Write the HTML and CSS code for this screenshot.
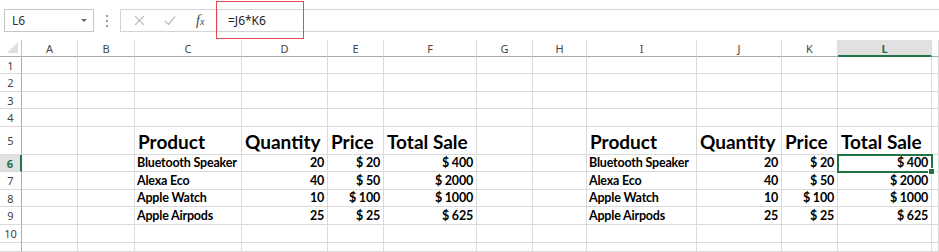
FILE: index.html
```html
<!DOCTYPE html>
<html lang="en">
<head>
    <meta charset="UTF-8">
    <title>Sheet1 - Excel</title>
    <link rel="stylesheet" href="styles.css">
</head>
<body>
    <div class="formula-row">
        <div class="name-box">
            <span>L6</span>
            <span class="drop"></span>
        </div>
        <div class="grip">
            <i></i><i></i><i></i>
        </div>
        <div class="formula-box">
            <div class="fx-tools">
                <svg class="tool" width="11" height="11" viewBox="0 0 11 11"><path d="M1 1 L10 10 M10 1 L1 10" stroke="#bdbdbd" stroke-width="1.2" fill="none"/></svg>
                <svg class="tool" width="12" height="11" viewBox="0 0 12 11"><path d="M1 6 L4.5 9.5 L11 1.5" stroke="#bdbdbd" stroke-width="1.2" fill="none"/></svg>
                <span class="fx">f<small>x</small></span>
            </div>
            <div class="formula">=J6*K6</div>
        </div>
        <div class="callout"></div>
    </div>

    <div class="sheet">
        <!-- column headings -->
        <div class="corner"><span class="tri"></span></div>
        <div class="ch">A</div><div class="ch">B</div><div class="ch">C</div><div class="ch">D</div>
        <div class="ch">E</div><div class="ch">F</div><div class="ch">G</div><div class="ch">H</div>
        <div class="ch">I</div><div class="ch">J</div><div class="ch">K</div><div class="ch active">L</div><div class="ch"></div>

        <div class="rh">1</div><div class="c"></div><div class="c"></div><div class="c"></div><div class="c"></div><div class="c"></div><div class="c"></div><div class="c"></div><div class="c"></div><div class="c"></div><div class="c"></div><div class="c"></div><div class="c"></div><div class="c"></div>
        <div class="rh">2</div><div class="c"></div><div class="c"></div><div class="c"></div><div class="c"></div><div class="c"></div><div class="c"></div><div class="c"></div><div class="c"></div><div class="c"></div><div class="c"></div><div class="c"></div><div class="c"></div><div class="c"></div>
        <div class="rh">3</div><div class="c"></div><div class="c"></div><div class="c"></div><div class="c"></div><div class="c"></div><div class="c"></div><div class="c"></div><div class="c"></div><div class="c"></div><div class="c"></div><div class="c"></div><div class="c"></div><div class="c"></div>
        <div class="rh">4</div><div class="c"></div><div class="c"></div><div class="c"></div><div class="c"></div><div class="c"></div><div class="c"></div><div class="c"></div><div class="c"></div><div class="c"></div><div class="c"></div><div class="c"></div><div class="c"></div><div class="c"></div>

        <div class="rh">5</div><div class="c"></div><div class="c"></div>
        <div class="c h">Product</div><div class="c h">Quantity</div><div class="c h">Price</div><div class="c h">Total Sale</div>
        <div class="c"></div><div class="c"></div>
        <div class="c h">Product</div><div class="c h">Quantity</div><div class="c h">Price</div><div class="c h">Total Sale</div><div class="c"></div>

        <div class="rh active">6</div><div class="c"></div><div class="c"></div>
        <div class="c t">Bluetooth Speaker</div><div class="c n">20</div><div class="c n">$ 20</div><div class="c n">$ 400</div>
        <div class="c"></div><div class="c"></div>
        <div class="c t">Bluetooth Speaker</div><div class="c n">20</div><div class="c n">$ 20</div><div class="c n selected">$ 400<span class="handle"></span></div><div class="c"></div>

        <div class="rh">7</div><div class="c"></div><div class="c"></div>
        <div class="c t">Alexa Eco</div><div class="c n">40</div><div class="c n">$ 50</div><div class="c n">$ 2000</div>
        <div class="c"></div><div class="c"></div>
        <div class="c t">Alexa Eco</div><div class="c n">40</div><div class="c n">$ 50</div><div class="c n">$ 2000</div><div class="c"></div>

        <div class="rh">8</div><div class="c"></div><div class="c"></div>
        <div class="c t">Apple Watch</div><div class="c n">10</div><div class="c n">$ 100</div><div class="c n">$ 1000</div>
        <div class="c"></div><div class="c"></div>
        <div class="c t">Apple Watch</div><div class="c n">10</div><div class="c n">$ 100</div><div class="c n">$ 1000</div><div class="c"></div>

        <div class="rh">9</div><div class="c"></div><div class="c"></div>
        <div class="c t">Apple Airpods</div><div class="c n">25</div><div class="c n">$ 25</div><div class="c n">$ 625</div>
        <div class="c"></div><div class="c"></div>
        <div class="c t">Apple Airpods</div><div class="c n">25</div><div class="c n">$ 25</div><div class="c n">$ 625</div><div class="c"></div>

        <div class="rh">10</div><div class="c"></div><div class="c"></div><div class="c"></div><div class="c"></div><div class="c"></div><div class="c"></div><div class="c"></div><div class="c"></div><div class="c"></div><div class="c"></div><div class="c"></div><div class="c"></div><div class="c"></div>
        <div class="rh"></div><div class="c"></div><div class="c"></div><div class="c"></div><div class="c"></div><div class="c"></div><div class="c"></div><div class="c"></div><div class="c"></div><div class="c"></div><div class="c"></div><div class="c"></div><div class="c"></div><div class="c"></div>
    </div>
</body>
</html>
```

FILE: styles.css
```css
body {
    margin: 0;
    width: 939px;
    height: 252px;
    overflow: hidden;
    background: #fff;
    font-family: "Noto Sans", "Open Sans", sans-serif;
}

/* formula bar */
.formula-row {
    position: relative;
    display: flex;
    align-items: flex-start;
    height: 40px;
    padding-top: 9px;
    box-sizing: border-box;
}
.name-box {
    display: flex;
    align-items: center;
    justify-content: space-between;
    margin-left: 4px;
    width: 90px;
    height: 23px;
    padding: 0 6px 0 7px;
    box-sizing: border-box;
    border: 1px solid #c6c6c6;
    font-size: 12px;
    color: #333;
}
.drop {
    width: 0;
    height: 0;
    border-left: 3px solid transparent;
    border-right: 3px solid transparent;
    border-top: 3px solid #666;
}
.grip {
    display: flex;
    flex-direction: column;
    align-items: center;
    gap: 3px;
    width: 26px;
    padding-top: 6px;
}
.grip i {
    display: block;
    width: 2px;
    height: 2px;
    background: #9a9a9a;
}
.formula-box {
    flex: 1;
    display: flex;
    height: 23px;
    box-sizing: border-box;
    border: 1px solid #d4d4d4;
    border-right: none;
}
.fx-tools {
    display: flex;
    align-items: center;
    width: 97px;
    padding-left: 13px;
    box-sizing: border-box;
    border-right: 1px solid #e2e2e2;
}
.tool {
    margin-right: 19px;
}
.fx {
    font-family: "Liberation Serif", serif;
    font-style: italic;
    font-size: 14px;
    color: #444;
    margin-left: 1px;
}
.fx small {
    font-size: 10px;
}
.formula {
    padding-left: 10px;
    font-size: 12px;
    line-height: 21px;
    color: #222;
}
.callout {
    position: absolute;
    left: 216px;
    top: 1px;
    width: 88px;
    height: 38px;
    box-sizing: border-box;
    border: 1px solid #e04a4f;
}

/* grid */
.sheet {
    display: grid;
    grid-template-columns: 22px 56px 57px 107px 86px 56px 93px 56px 54px 110px 85px 56px 94px 7px;
    grid-template-rows: 17px 17px 18px 17px 18px 28px 17px 18px 17px 18px 18px 9px;
}
.sheet > div {
    box-sizing: border-box;
    border-right: 1px solid #dadada;
    border-bottom: 1px solid #dadada;
    white-space: nowrap;
}
.corner {
    position: relative;
    border-right-color: #c4c4c4 !important;
    border-bottom-color: #ababab !important;
}
.tri {
    position: absolute;
    right: 3px;
    bottom: 3px;
    width: 0;
    height: 0;
    border-left: 11px solid transparent;
    border-bottom: 11px solid #dfdfdf;
}
.ch {
    border-right-color: #dcdcdc !important;
    border-bottom-color: #ababab !important;
    text-align: center;
    font-size: 11px;
    line-height: 17px;
    color: #444;
}
.ch.active {
    background: #e1e1e1;
    color: #217346;
    font-weight: bold;
    border-bottom: 2px solid #217346 !important;
}
.rh {
    border-right-color: #ababab !important;
    text-align: center;
    font-size: 11px;
    color: #444;
    display: flex;
    align-items: center;
    justify-content: center;
}
.rh.active {
    background: #e1e1e1;
    color: #217346;
    font-weight: bold;
    border-right: 2px solid #217346 !important;
}

/* cell text */
.t, .n, .h {
    display: flex;
    align-items: flex-end;
    font-family: Lato, "Liberation Sans", sans-serif;
    font-weight: bold;
    color: #000;
}
.t, .n {
    font-size: 12.5px;
    letter-spacing: -0.2px;
    line-height: 15px;
    padding-bottom: 1px;
}
.t {
    padding-left: 2px;
}
.n {
    justify-content: flex-end;
    padding-right: 3px;
}
.h {
    font-size: 19px;
    line-height: 24px;
    padding-left: 3px;
}
.selected {
    position: relative;
    outline: 2px solid #217346;
    outline-offset: -1px;
}
.handle {
    position: absolute;
    right: -4px;
    bottom: -4px;
    width: 5px;
    height: 5px;
    background: #217346;
    border: 1px solid #fff;
}
```
